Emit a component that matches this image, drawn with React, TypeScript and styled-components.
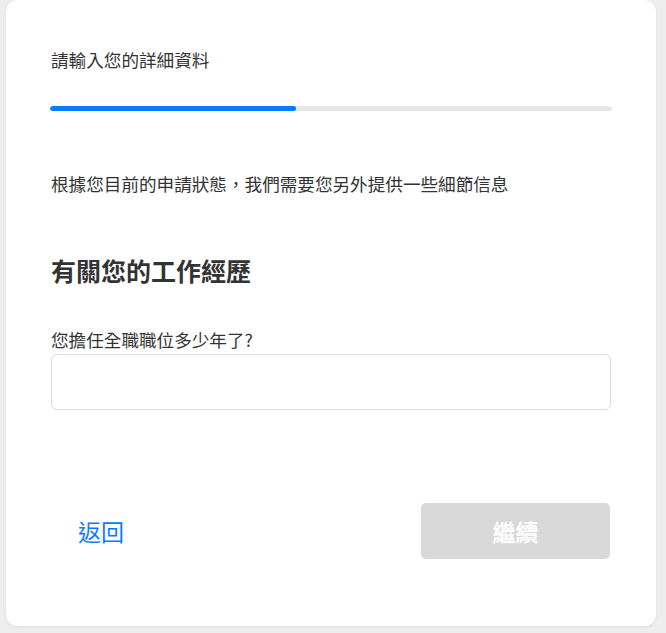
import React from 'react'
import styled, { createGlobalStyle } from 'styled-components'

const GlobalStyle = createGlobalStyle`
  html, body {
    margin: 0;
    padding: 0;
    background: #eeeeee;
  }
  body {
    font-family: "Noto Sans CJK TC", "Noto Sans", sans-serif;
    color: #333333;
  }
`

const Page = styled.div`
  padding: 0 10px 7px 6px;
`

const Card = styled.div`
  background: #ffffff;
  border-radius: 12px;
  box-shadow: 0 1px 4px rgba(0, 0, 0, 0.06);
  padding: 47px 45px 67px 45px;
  display: flex;
  flex-direction: column;
`

const StepTitle = styled.div`
  font-size: 17.6px;
  line-height: 26px;
  color: #333333;
`

const Progress = styled.div`
  margin: 33px -1px 0 -1px;
  height: 5px;
  border-radius: 3px;
  background: #e6e6e6;
  overflow: hidden;
`

const ProgressFill = styled.div`
  height: 100%;
  border-radius: 3px;
  background: #0a7bff;
`

const Intro = styled.p`
  margin: 60px 0 0 0;
  font-size: 17.6px;
  line-height: 26px;
`

const Heading = styled.h2`
  margin: 56px 0 0 0;
  font-size: 25px;
  line-height: 35px;
  font-weight: 700;
  color: #333333;
`

const Label = styled.label`
  display: block;
  margin-top: 39px;
  font-size: 17.6px;
  line-height: 26px;
`

const Input = styled.input`
  box-sizing: border-box;
  display: block;
  width: 100%;
  height: 56px;
  margin-top: 1px;
  border: 1px solid #dcdcdc;
  border-radius: 6px;
  padding: 0 14px;
  font: inherit;
  font-size: 17.6px;
  outline: none;
`

const Actions = styled.div`
  margin-top: 93px;
  display: flex;
  justify-content: space-between;
  align-items: center;
`

const BackButton = styled.button`
  height: 56px;
  padding: 0 27px;
  border: none;
  background: transparent;
  color: #0a7bff;
  font-family: inherit;
  font-size: 23px;
  cursor: pointer;
`

const NextButton = styled.button<{ $disabled?: boolean }>`
  width: 189px;
  height: 56px;
  margin-right: 1px;
  border: none;
  border-radius: 5px;
  background: ${p => (p.$disabled ? '#d9d9d9' : '#0a7bff')};
  color: #ffffff;
  font-family: inherit;
  font-size: 23px;
  font-weight: 700;
`

export default function App() {
  const progress = 43.75
  return (
    <>
      <GlobalStyle />
      <Page>
        <Card>
          <StepTitle>請輸入您的詳細資料</StepTitle>
          <Progress>
            <ProgressFill style={{ width: `${progress}%` }} />
          </Progress>
          <Intro>根據您目前的申請狀態，我們需要您另外提供一些細節信息</Intro>
          <Heading>有關您的工作經歷</Heading>
          <Label htmlFor="years">您擔任全職職位多少年了?</Label>
          <Input id="years" type="text" />
          <Actions>
            <BackButton type="button">返回</BackButton>
            <NextButton type="button" $disabled disabled>繼續</NextButton>
          </Actions>
        </Card>
      </Page>
    </>
  )
}
